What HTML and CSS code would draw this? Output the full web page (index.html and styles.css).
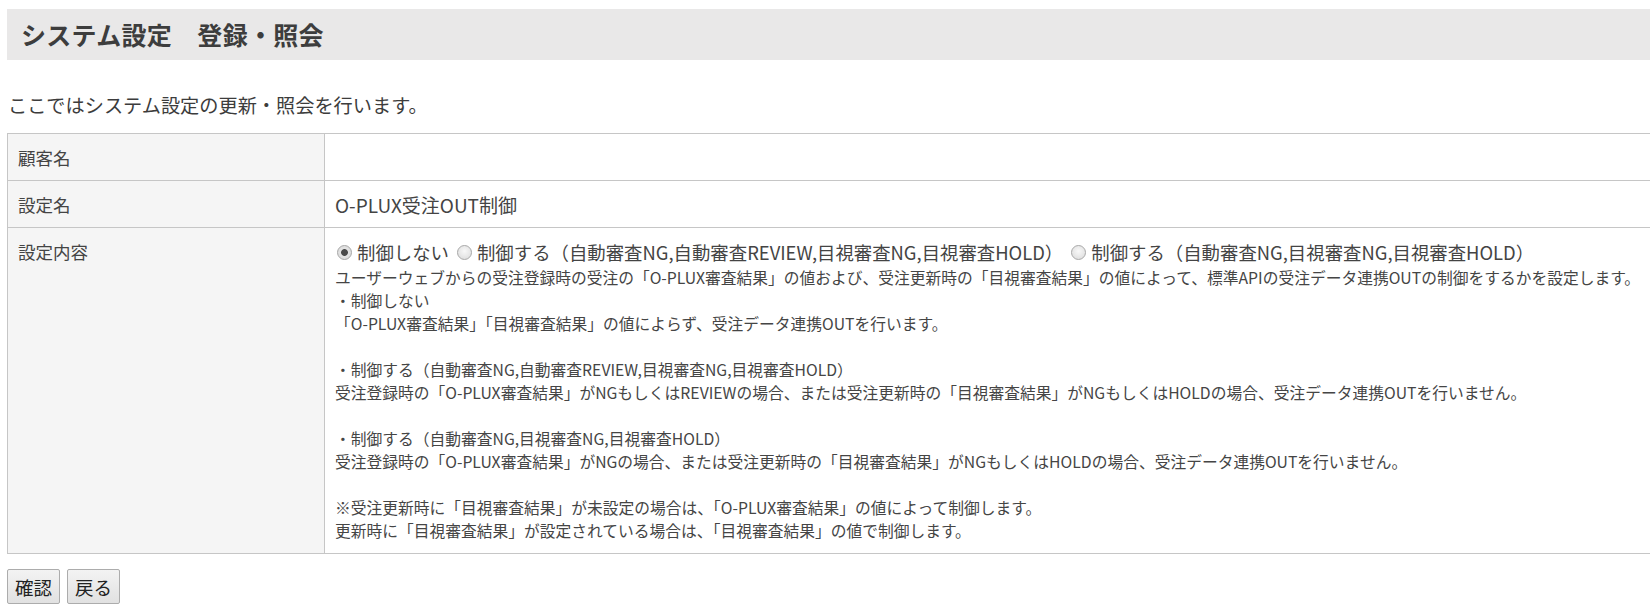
FILE: index.html
```html
<!DOCTYPE html>
<html lang="ja">
<head>
<meta charset="utf-8">
<title>システム設定 登録・照会</title>
<link rel="stylesheet" href="styles.css">
</head>
<body>
<div class="page">
  <h1 class="page-title">システム設定　登録・照会</h1>
  <p class="intro">ここではシステム設定の更新・照会を行います。</p>
  <table class="form-table">
    <tr class="row-short">
      <th>顧客名</th>
      <td></td>
    </tr>
    <tr class="row-short">
      <th>設定名</th>
      <td>O-PLUX受注OUT制御</td>
    </tr>
    <tr class="row-tall">
      <th>設定内容</th>
      <td>
        <div class="radios">
          <label class="radio"><input type="radio" name="ctl" checked> 制御しない</label>
          <label class="radio"><input type="radio" name="ctl"> 制御する（自動審査NG,自動審査REVIEW,目視審査NG,目視審査HOLD）</label>
          <label class="radio"><input type="radio" name="ctl"> 制御する（自動審査NG,目視審査NG,目視審査HOLD）</label>
        </div>
        <div class="note">ユーザーウェブからの受注登録時の受注の「O-PLUX審査結果」の値および、受注更新時の「目視審査結果」の値によって、標準APIの受注データ連携OUTの制御をするかを設定します。<br>・制御しない<br>「O-PLUX審査結果」「目視審査結果」の値によらず、受注データ連携OUTを行います。<br><br>・制御する（自動審査NG,自動審査REVIEW,目視審査NG,目視審査HOLD）<br>受注登録時の「O-PLUX審査結果」がNGもしくはREVIEWの場合、または受注更新時の「目視審査結果」がNGもしくはHOLDの場合、受注データ連携OUTを行いません。<br><br>・制御する（自動審査NG,目視審査NG,目視審査HOLD）<br>受注登録時の「O-PLUX審査結果」がNGの場合、または受注更新時の「目視審査結果」がNGもしくはHOLDの場合、受注データ連携OUTを行いません。<br><br>※受注更新時に「目視審査結果」が未設定の場合は、「O-PLUX審査結果」の値によって制御します。<br>更新時に「目視審査結果」が設定されている場合は、「目視審査結果」の値で制御します。</div>
      </td>
    </tr>
  </table>
  <div class="buttons">
    <button class="btn" type="button">確認</button>
    <button class="btn" type="button">戻る</button>
  </div>
</div>
</body>
</html>
```

FILE: styles.css
```css
html, body {
  margin: 0;
  padding: 0;
  background: #ffffff;
  overflow: hidden;
}
body {
  font-family: "Noto Sans CJK JP", "Noto Sans", sans-serif;
  color: #3c3c3c;
}
.page {
  padding: 9px 0 0 7px;
  width: 1720px;
}
.page-title {
  margin: 0;
  height: 51px;
  line-height: 51px;
  background: #e9e8e8;
  padding-left: 14px;
  font-size: 25px;
  font-weight: bold;
  color: #3d3d3d;
  letter-spacing: 0.3px;
}
.intro {
  margin: 32px 0 0 1px;
  font-size: 19.2px;
  line-height: 26px;
  color: #3c3c3c;
}
.form-table {
  margin-top: 15px;
  border-collapse: collapse;
  width: 1700px;
}
.form-table th,
.form-table td {
  border: 1px solid #c6c6c6;
  font-weight: normal;
  text-align: left;
  padding: 0 10px;
  color: #444;
}
.form-table th {
  width: 296px;
  background: #f5f5f5;
  font-size: 17.5px;
}
.form-table td {
  font-size: 19px;
}
.row-short th,
.row-short td {
  height: 47px;
  box-sizing: border-box;
  vertical-align: middle;
}
.row-tall th,
.row-tall td {
  vertical-align: top;
  padding-top: 10px;
  padding-bottom: 11px;
}
.row-tall th {
  line-height: 28px;
}
.radios {
  display: flex;
  align-items: center;
  height: 28px;
  font-size: 18.4px;
  white-space: nowrap;
}
.radio {
  display: inline-flex;
  align-items: center;
  margin-right: 6px;
}
.radio input {
  appearance: none;
  -webkit-appearance: none;
  width: 15px;
  height: 15px;
  margin: 0 5px 0 2px;
  border: 1px solid #a9a9a9;
  border-radius: 50%;
  background: radial-gradient(circle at 50% 40%, #f8f8f8 0, #d9d9d9 100%);
  box-sizing: border-box;
}
.radio input:checked {
  background: radial-gradient(circle, #4a4a4a 0, #4a4a4a 3px, #e4e4e4 3.8px, #d6d6d6 100%);
}
.note {
  font-size: 15.75px;
  line-height: 23px;
  white-space: nowrap;
  color: #454545;
}
.buttons {
  display: flex;
  gap: 7px;
  margin-top: 15px;
}
.btn {
  height: 35px;
  padding: 0 7px;
  font-family: "Noto Sans CJK JP", sans-serif;
  font-size: 18.5px;
  color: #222;
  border: 1px solid #acacac;
  border-radius: 2px;
  background: linear-gradient(#f3f3f3, #e1e1e1);
  cursor: pointer;
}
```
